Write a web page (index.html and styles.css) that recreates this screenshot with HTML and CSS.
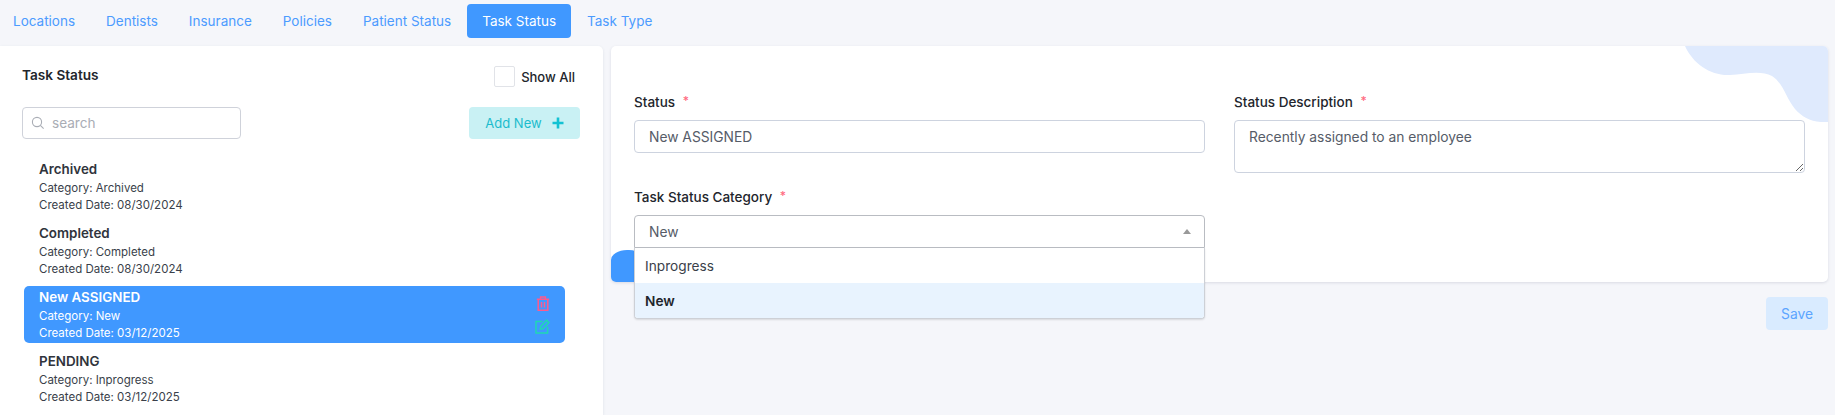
FILE: index.html
```html
<!DOCTYPE html>
<html lang="en">
<head>
    <meta charset="UTF-8">
    <title>Task Status</title>
    <link rel="stylesheet" href="styles.css">
</head>
<body>
    <nav class="tabs">
        <a class="tab">Locations</a>
        <a class="tab">Dentists</a>
        <a class="tab">Insurance</a>
        <a class="tab">Policies</a>
        <a class="tab">Patient Status</a>
        <a class="tab tab-active">Task Status</a>
        <a class="tab">Task Type</a>
    </nav>

    <main class="content">
        <!-- list of statuses -->
        <section class="list-panel">
            <div class="list-head">
                <h2 class="list-title">Task Status</h2>
                <label class="show-all"><span class="checkbox"></span>Show All</label>
            </div>
            <div class="list-tools">
                <div class="search">
                    <svg class="search-icon" viewBox="0 0 14 14" width="14" height="14" fill="none" stroke="#a9adb5" stroke-width="1.1">
                        <circle cx="6" cy="6" r="4.6"/>
                        <path d="M9.4 9.4 12.6 12.6"/>
                    </svg>
                    <input class="search-input" type="text" placeholder="search">
                </div>
                <button class="btn-add">Add New
                    <svg viewBox="0 0 12 12" width="12" height="12" fill="none" stroke="#13c2d3" stroke-width="2.6">
                        <path d="M6 0.5V11.5M0.5 6H11.5"/>
                    </svg>
                </button>
            </div>
            <ul class="status-list">
                <li class="status-item">
                    <div class="status-name">Archived</div>
                    <div class="status-line">Category: Archived</div>
                    <div class="status-line">Created Date: 08/30/2024</div>
                </li>
                <li class="status-item">
                    <div class="status-name">Completed</div>
                    <div class="status-line">Category: Completed</div>
                    <div class="status-line">Created Date: 08/30/2024</div>
                </li>
                <li class="status-item status-item-active">
                    <div class="status-name">New ASSIGNED</div>
                    <div class="status-line">Category: New</div>
                    <div class="status-line">Created Date: 03/12/2025</div>
                    <div class="status-actions">
                        <svg viewBox="0 0 14 15" width="14" height="15" fill="none" stroke="#ff5a8c" stroke-width="1.5">
                            <path d="M0.8 3.2H13.2M4.6 3V0.9H9.4V3M2.2 3.2V14.2H11.8V3.2M5.5 6V11.4M8.5 6V11.4"/>
                        </svg>
                        <svg viewBox="0 0 15 15" width="15" height="15" fill="none" stroke="#1fd8b4" stroke-width="1.5">
                            <path d="M7.5 2.4H1V14H12.6V7.5"/>
                            <path d="M5.6 7.6 11.5 1.2 13.9 3.6 7.7 9.8 5.2 10.2Z"/>
                        </svg>
                    </div>
                </li>
                <li class="status-item">
                    <div class="status-name">PENDING</div>
                    <div class="status-line">Category: Inprogress</div>
                    <div class="status-line">Created Date: 03/12/2025</div>
                </li>
            </ul>
        </section>

        <!-- edit form -->
        <section class="form-column">
            <div class="form-panel">
                <svg class="blob-top" viewBox="0 0 143 76" width="143" height="76">
                    <path d="M0 0C8 18 26 30 45 29C60 28 76 24 87 30C98 37 101 52 110 63C118 72 128 77 143 76V0Z" fill="#dfeafd"/>
                </svg>
                <span class="blob-bottom"></span>
                <div class="form-grid">
                    <div class="field">
                        <label class="field-label">Status <span class="required">*</span></label>
                        <input class="field-input" type="text" value="New ASSIGNED">
                    </div>
                    <div class="field">
                        <label class="field-label">Status Description <span class="required">*</span></label>
                        <textarea class="field-textarea">Recently assigned to an employee</textarea>
                    </div>
                    <div class="field">
                        <label class="field-label">Task Status Category <span class="required">*</span></label>
                        <div class="select">
                            <div class="select-value">New<span class="select-arrow"></span></div>
                            <ul class="select-menu">
                                <li class="select-option">Inprogress</li>
                                <li class="select-option select-option-active">New</li>
                            </ul>
                        </div>
                    </div>
                </div>
            </div>
            <div class="form-actions">
                <button class="btn-save">Save</button>
            </div>
        </section>
    </main>
</body>
</html>
```

FILE: styles.css
```css
* {
    box-sizing: border-box;
}

body {
    margin: 0;
    height: 415px;
    overflow: hidden;
    background: #f5f6fa;
    color: #2b2f38;
    font-family: Inter, "Open Sans", sans-serif;
    font-size: 12.5px;
}

ul {
    list-style: none;
    margin: 0;
    padding: 0;
}

/* tabs */
.tabs {
    display: flex;
    gap: 1px;
    height: 46px;
    padding-top: 4px;
}

.tab {
    display: flex;
    align-items: center;
    height: 34px;
    padding: 0 15px;
    border-radius: 4px;
    color: #4c9bff;
    font-size: 13.5px;
}

.tab:first-child {
    padding-left: 13px;
}

.tab-active {
    background: #4098ff;
    color: #fff;
}

.content {
    display: flex;
    gap: 8px;
    padding-right: 7px;
}

/* left panel */
.list-panel {
    flex: 0 0 603px;
    height: 369px;
    padding: 20px 0 0 22px;
    background: #fff;
    border-radius: 0 5px 0 0;
    box-shadow: 0 1px 3px rgba(60, 70, 100, 0.12);
}

.list-head {
    display: flex;
    justify-content: space-between;
    align-items: center;
    height: 21px;
    padding-right: 28px;
}

.list-title {
    margin: -4px 0 0;
    color: #22252c;
    font-size: 13.6px;
    font-weight: 600;
}

.show-all {
    display: flex;
    align-items: center;
    gap: 6px;
    color: #22252c;
    font-size: 13px;
    font-weight: 500;
}

.checkbox {
    width: 21px;
    height: 21px;
    border: 1px solid #e1e3e8;
    border-radius: 2px;
}

.list-tools {
    display: flex;
    justify-content: space-between;
    margin-top: 20px;
    padding-right: 23px;
}

.search {
    display: flex;
    align-items: center;
    gap: 5px;
    width: 219px;
    height: 32px;
    padding-left: 8px;
    border: 1px solid #cfd2da;
    border-radius: 4px;
}

.search-input {
    flex: 1;
    min-width: 0;
    border: 0;
    outline: 0;
    font: inherit;
    font-size: 13.6px;
}

.search-input::placeholder {
    color: #a9adb5;
}

.btn-add {
    display: flex;
    align-items: center;
    justify-content: center;
    gap: 10px;
    width: 111px;
    height: 32px;
    border: 0;
    border-radius: 4px;
    background: #c9f1f4;
    color: #1cbccd;
    font: inherit;
    font-size: 13px;
}

.status-list {
    margin: 19px 0 0 2px;
}

.status-item {
    position: relative;
    width: 541px;
    height: 57px;
    margin-bottom: 7px;
    padding: 2px 0 0 15px;
    border-radius: 5px;
    color: #3a3f4a;
}

.status-name {
    margin-bottom: 2px;
    color: #30343c;
    font-size: 13.4px;
    font-weight: 600;
    line-height: 18px;
}

.status-line {
    font-size: 11.5px;
    line-height: 17px;
}

.status-item-active {
    background: #4098ff;
    color: #fff;
}

.status-item-active .status-name {
    color: #fff;
}

.status-actions {
    position: absolute;
    top: 10px;
    right: 15px;
    display: flex;
    flex-direction: column;
    align-items: center;
    gap: 8px;
}

/* right side */
.form-column {
    flex: 1;
}

.form-panel {
    position: relative;
    height: 236px;
    padding: 47px 23px 0;
    background: #fff;
    border-radius: 5px;
    box-shadow: 0 1px 3px rgba(60, 70, 100, 0.15);
}

.blob-top {
    position: absolute;
    top: 0;
    right: 0;
    border-top-right-radius: 5px;
}

.blob-bottom {
    position: absolute;
    left: 0;
    bottom: 0;
    width: 36px;
    height: 32px;
    background: #4098ff;
    border-radius: 16px 18px 0 5px / 10px 18px 0 5px;
}

.form-grid {
    position: relative;
    display: grid;
    grid-template-columns: 571px 571px;
    align-items: start;
    column-gap: 29px;
    row-gap: 15px;
}

.field-label {
    display: block;
    height: 18px;
    margin-bottom: 9px;
    color: #22252c;
    font-size: 13.5px;
    font-weight: 500;
    line-height: 18px;
}

.required {
    position: relative;
    top: -2px;
    margin-left: 4px;
    color: #ff6b81;
    font-size: 12px;
}

.field-input,
.field-textarea {
    display: block;
    width: 100%;
    padding: 0 14px;
    border: 1px solid #cdd3df;
    border-radius: 4px;
    outline: 0;
    color: #565c68;
    font: inherit;
    font-size: 13.8px;
}

.field-input {
    height: 33px;
}

.field-textarea {
    height: 53px;
    padding-top: 7px;
    line-height: 18px;
}

.select {
    position: relative;
}

.select-value {
    display: flex;
    justify-content: space-between;
    align-items: center;
    height: 33px;
    padding: 0 14px;
    background: #fff;
    border: 1px solid #b9bcc2;
    border-radius: 4px 4px 0 0;
    color: #565c68;
    font-size: 13.8px;
}

.select-arrow {
    width: 0;
    height: 0;
    margin-right: -1px;
    border: 4px solid transparent;
    border-top: 0;
    border-bottom: 5px solid #999;
}

.select-menu {
    position: absolute;
    top: 33px;
    left: 0;
    right: 0;
    background: #fff;
    border: 1px solid #cdd0d6;
    border-top: 0;
    border-radius: 0 0 4px 4px;
    box-shadow: 0 1px 2px rgba(0, 0, 0, 0.12);
    overflow: hidden;
}

.select-option {
    display: flex;
    align-items: center;
    height: 35px;
    padding: 0 10px;
    color: #3a3f4a;
    font-size: 13.7px;
}

.select-option-active {
    background: #e8f3fe;
    color: #22252c;
    font-weight: 600;
}

.form-actions {
    display: flex;
    justify-content: flex-end;
    margin-top: 15px;
}

.btn-save {
    width: 62px;
    height: 33px;
    border: 0;
    border-radius: 4px;
    background: #d9ebff;
    color: #5ca5ff;
    font: inherit;
    font-size: 13.8px;
}
```
